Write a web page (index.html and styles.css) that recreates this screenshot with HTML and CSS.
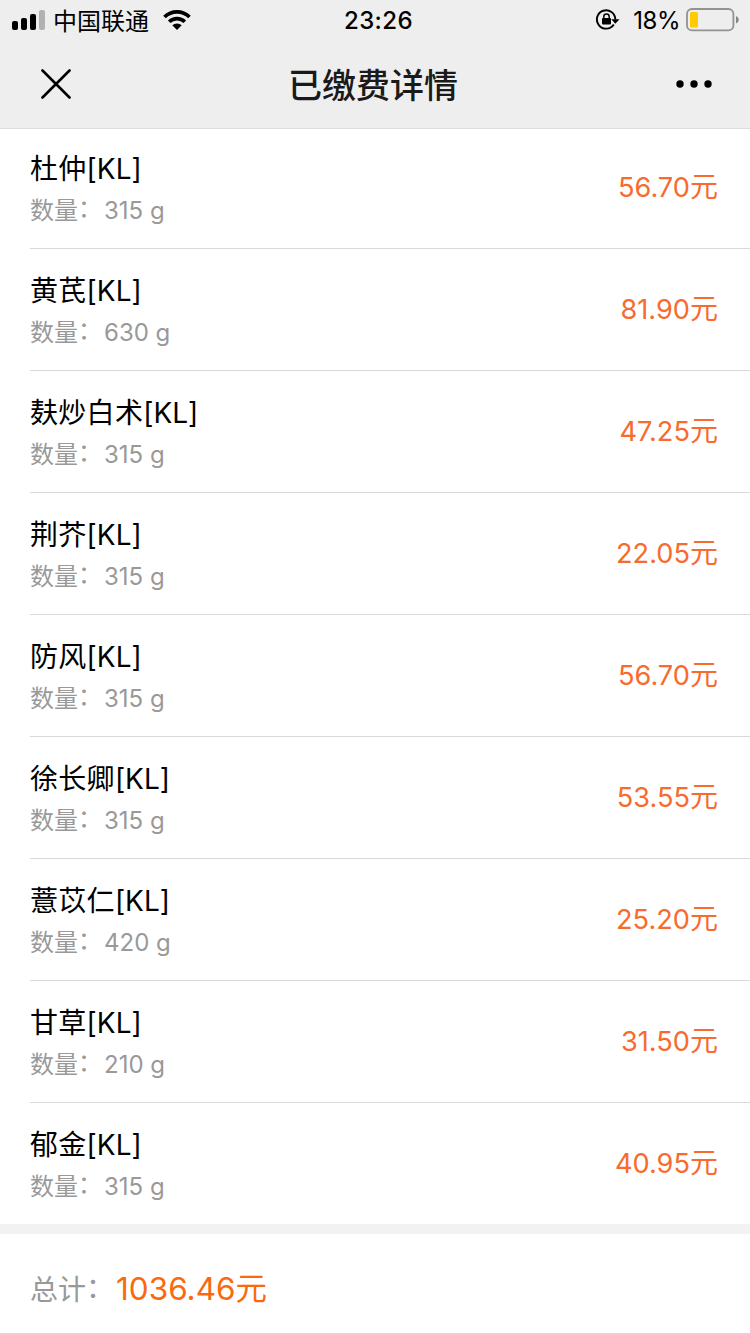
FILE: index.html
```html
<!DOCTYPE html>
<html lang="zh-CN">
<head>
<meta charset="utf-8">
<title>已缴费详情</title>
<link rel="stylesheet" href="styles.css">
</head>
<body>
<header class="header">
  <div class="status">
    <div class="status-left">
      <svg class="signal" width="33" height="20" viewBox="0 0 33 20"><rect x="0" y="11" width="6" height="9" rx="2"/><rect x="9" y="8" width="6" height="12" rx="2"/><rect x="18" y="4" width="6" height="16" rx="2"/><rect x="27" y="0" width="6" height="20" rx="2" fill="#b1b1b1"/></svg>
      <span class="carrier">中国联通</span>
      <svg class="wifi" width="28" height="20" viewBox="0 0 28 20"><path d="M1.5 7A18 18 0 0 1 26.5 7" fill="none" stroke="#000" stroke-width="3.8"/><path d="M6.2 11.8A11.2 11.2 0 0 1 21.8 11.8" fill="none" stroke="#000" stroke-width="3.6"/><path d="M9.3 15.3A6.8 6.8 0 0 1 18.7 15.3L14 20Z"/></svg>
    </div>
    <span class="clock">23:26</span>
    <div class="status-right">
      <svg class="lock" width="24" height="22" viewBox="0 0 24 22"><path d="M17.8 15.5A9.2 9.2 0 1 1 19.3 10.5" fill="none" stroke="#000" stroke-width="1.9"/><path d="M15.3 10.2H23.5L19.3 14.7Z"/><rect x="6" y="9" width="9" height="6.5" rx="1"/><path d="M7.8 9.5V7.6a2.7 2.7 0 0 1 5.4 0V9.5" fill="none" stroke="#000" stroke-width="1.5"/></svg>
      <span class="percent">18%</span>
      <svg class="battery" width="54" height="24" viewBox="0 0 54 24"><rect x="1" y="1" width="46.4" height="21.4" rx="5" fill="none" stroke="#929292" stroke-width="1.8"/><rect x="4" y="4" width="8" height="15.5" rx="1.5" fill="#fecb00"/><path d="M50 8Q52.8 9.2 52.8 11.8T50 15.6Z" fill="#858585"/></svg>
    </div>
  </div>
  <div class="navbar">
    <svg class="close" width="30" height="30" viewBox="0 0 30 30"><path d="M1.5 1.5 28.5 28.5M28.5 1.5 1.5 28.5" stroke="#000" stroke-width="2.6" stroke-linecap="round"/></svg>
    <h1 class="title">已缴费详情</h1>
    <svg class="more" width="36" height="8" viewBox="0 0 36 8"><circle cx="4" cy="4" r="3.7"/><circle cx="18" cy="4" r="3.7"/><circle cx="32" cy="4" r="3.7"/></svg>
  </div>
</header>
<main>
  <ul class="items">
    <li class="item"><div class="info"><p class="name">杜仲<span class="tag">[KL]</span></p><p class="qty"><span class="label">数量<span class="colon">：</span></span>315 g</p></div><p class="price">56.70<span class="unit">元</span></p></li>
    <li class="item"><div class="info"><p class="name">黄芪<span class="tag">[KL]</span></p><p class="qty"><span class="label">数量<span class="colon">：</span></span>630 g</p></div><p class="price">81.90<span class="unit">元</span></p></li>
    <li class="item"><div class="info"><p class="name">麸炒白术<span class="tag">[KL]</span></p><p class="qty"><span class="label">数量<span class="colon">：</span></span>315 g</p></div><p class="price">47.25<span class="unit">元</span></p></li>
    <li class="item"><div class="info"><p class="name">荆芥<span class="tag">[KL]</span></p><p class="qty"><span class="label">数量<span class="colon">：</span></span>315 g</p></div><p class="price">22.05<span class="unit">元</span></p></li>
    <li class="item"><div class="info"><p class="name">防风<span class="tag">[KL]</span></p><p class="qty"><span class="label">数量<span class="colon">：</span></span>315 g</p></div><p class="price">56.70<span class="unit">元</span></p></li>
    <li class="item"><div class="info"><p class="name">徐长卿<span class="tag">[KL]</span></p><p class="qty"><span class="label">数量<span class="colon">：</span></span>315 g</p></div><p class="price">53.55<span class="unit">元</span></p></li>
    <li class="item"><div class="info"><p class="name">薏苡仁<span class="tag">[KL]</span></p><p class="qty"><span class="label">数量<span class="colon">：</span></span>420 g</p></div><p class="price">25.20<span class="unit">元</span></p></li>
    <li class="item"><div class="info"><p class="name">甘草<span class="tag">[KL]</span></p><p class="qty"><span class="label">数量<span class="colon">：</span></span>210 g</p></div><p class="price">31.50<span class="unit">元</span></p></li>
    <li class="item"><div class="info"><p class="name">郁金<span class="tag">[KL]</span></p><p class="qty"><span class="label">数量<span class="colon">：</span></span>315 g</p></div><p class="price">40.95<span class="unit">元</span></p></li>
  </ul>
  <div class="total"><span class="total-label">总计<span class="colon">：</span></span><span class="total-value">1036.46<span class="unit">元</span></span></div>
</main>
</body>
</html>
```
FILE: styles.css
```css
* { box-sizing: border-box; margin: 0; padding: 0; }
body {
  width: 750px;
  height: 1334px;
  overflow: hidden;
  background: #fff;
  color: #000;
  font-family: Inter, "Noto Sans CJK SC", sans-serif;
}
svg { display: block; flex: none; }
.header { height: 129px; background: #eee; border-bottom: 1px solid #dedede; }
.status {
  display: grid;
  grid-template-columns: 1fr auto 1fr;
  align-items: center;
  height: 40px;
  padding: 0 10px 0 12px;
}
.status-left, .status-right { display: flex; align-items: center; }
.status-right { justify-content: flex-end; }
.carrier { margin-left: 8px; padding-top: 4px; font-size: 24px; line-height: 36px; }
.wifi { margin-left: 14px; }
.clock { padding: 2px 0 0 5px; font-size: 24px; font-weight: 500; letter-spacing: .4px; line-height: 38px; }
.percent { margin: 0 6px 0 13px; padding-top: 2px; font-size: 24px; letter-spacing: -.5px; line-height: 38px; }
.navbar {
  display: grid;
  grid-template-columns: 1fr auto 1fr;
  align-items: center;
  height: 88px;
  padding: 0 38px 0 41px;
}
.title { padding: 4px 7px 0 0; color: #1a1a1a; font-size: 34px; font-weight: 500; line-height: 84px; }
.more { justify-self: end; }
.items { list-style: none; margin-top: -2px; border-bottom: 10px solid #f2f2f2; }
.item {
  display: flex;
  justify-content: space-between;
  align-items: center;
  height: 122px;
  margin-left: 30px;
  padding-right: 32px;
  border-bottom: 1px solid #d9d9d9;
}
.item:last-child { height: 121px; border-bottom: 0; }
.info { padding-top: 4px; }
.name { height: 42px; font-size: 28px; line-height: 42px; letter-spacing: .3px; }
.tag { letter-spacing: 0; }
.qty { height: 42px; color: #999; font-size: 24px; line-height: 42px; }
.label { display: inline-flex; width: 74px; white-space: nowrap; }
.colon { display: inline-block; transform: translateY(-2px); }
.price { color: #f76b2e; font-size: 27.2px; line-height: 42px; }
.price .unit { font-size: 28px; }
.unit { line-height: 1; }
.total {
  display: flex;
  align-items: center;
  height: 100px;
  padding: 11px 30px 0;
  border-bottom: 1px solid #d9d9d9;
}
.total-label { width: 86px; padding-top: 2px; white-space: nowrap; color: #999; font-size: 28px; line-height: 42px; }
.total-value { color: #f96a0e; font-size: 31.5px; line-height: 42px; }
```
